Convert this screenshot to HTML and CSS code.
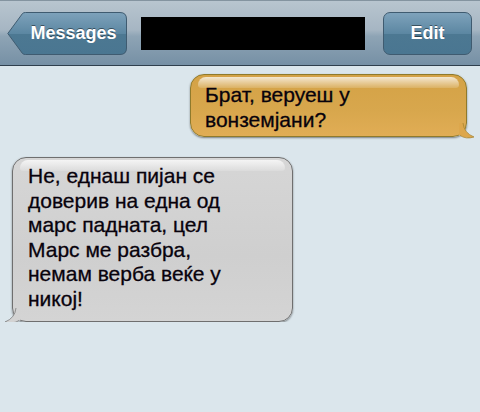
FILE: index.html
```html
<!DOCTYPE html>
<html lang="en">
<head>
    <meta charset="UTF-8">
    <meta name="viewport" content="width=device-width, initial-scale=1.0">
    <title>Messages</title>
    <link rel="stylesheet" href="styles.css">
</head>
<body>

    <!-- top navigation bar -->
    <div class="navbar">
        <button class="nav-btn back-btn">
            <svg class="back-shape" width="120" height="43" viewBox="0 0 120 43">
                <defs>
                    <linearGradient id="backFill" x1="0" y1="0" x2="0" y2="1">
                        <stop offset="0" stop-color="#7ea2bb"/>
                        <stop offset="0.5" stop-color="#5c87a2"/>
                        <stop offset="0.52" stop-color="#4c7892"/>
                        <stop offset="1" stop-color="#4a7691"/>
                    </linearGradient>
                </defs>
                <path d="M0.8 21.5 L15.5 1.5 Q16.5 0.5 18.5 0.5 L113 0.5 Q119.5 0.5 119.5 7 L119.5 36 Q119.5 42.5 113 42.5 L18.5 42.5 Q16.5 42.5 15.5 41.5 Z" fill="url(#backFill)" stroke="#3f5b70" stroke-width="1"/>
            </svg>
            <span class="btn-label">Messages</span>
        </button>
        <div class="contact-name"></div>
        <button class="nav-btn edit-btn"><span class="btn-label">Edit</span></button>
    </div>

    <!-- conversation -->
    <div class="thread">
        <div class="bubble sent">
            <p class="msg-text">Брат, веруеш у<br>вонземјани?</p>
            <svg class="tail tail-right" width="16" height="16" viewBox="0 0 16 16">
                <path d="M0 0 L4 0 Q5 10 15 14 Q7 16.5 0 12 Z" fill="#dda74c"/>
                <path d="M4 0 Q5 10 15 14 Q7 16.5 1 12.5" fill="none" stroke="#a0802e" stroke-width="0.7"/>
            </svg>
        </div>

        <div class="bubble received">
            <p class="msg-text">Не, еднаш пијан се<br>доверив на една од<br>марс падната, цел<br>Марс ме разбра,<br>немам верба веќе у<br>никој!</p>
            <svg class="tail tail-left" width="16" height="16" viewBox="0 0 16 16">
                <path d="M16 0 L12 0 Q11 10 1 14 Q9 16.5 16 12 Z" fill="#d3d3d3"/>
                <path d="M12 0 Q11 10 1 14 Q9 16.5 15 12.5" fill="none" stroke="#6f6f6f" stroke-width="0.7"/>
            </svg>
        </div>
    </div>

</body>
</html>
```

FILE: styles.css
```css
/* page */
body {
    margin: 0;
    background-color: #dbe6ec;
    font-family: "Liberation Sans", Arial, sans-serif;
}

/* header bar */
.navbar {
    display: flex;
    align-items: center;
    box-sizing: border-box;
    height: 66px;
    padding-left: 7px;
    background: linear-gradient(#b8c5cf 0%, #a6b6c3 45%, #8ea4b5 55%, #7690a5 100%);
    border-top: 1px solid #8494a0;
    border-bottom: 1px solid #2f3f4d;
}

.nav-btn {
    position: relative;
    height: 43px;
    padding: 0;
    border: none;
    background: none;
    color: #fff;
    font-family: "Liberation Sans", Arial, sans-serif;
    font-weight: bold;
    font-size: 18px;
    text-shadow: 0 -1px 0 rgba(0, 0, 0, 0.45);
}

.back-btn {
    width: 120px;
    padding-left: 13px;
}

.back-shape {
    position: absolute;
    top: 0;
    left: 0;
}

.btn-label {
    position: relative; /* keeps text above the svg shape */
}

.contact-name {
    width: 224px;
    height: 33px;
    margin-left: 14px;
    background-color: #000;
}

.edit-btn {
    width: 89px;
    margin-left: 18px;
    border: 1px solid #3f5b70;
    border-radius: 7px;
    background: linear-gradient(#7ea2bb 0%, #5c87a2 50%, #4c7892 52%, #4a7691 100%);
}

/* messages */
.thread {
    display: flex;
    flex-direction: column;
    padding: 8px 13px 0 12px;
}

.bubble {
    position: relative;
    border-radius: 14px;
    box-shadow: 0 1px 2px rgba(0, 0, 0, 0.45);
}

/* glossy highlight on top of each bubble */
.bubble::before {
    content: "";
    position: absolute;
    top: 2px;
    left: 7px;
    right: 7px;
    height: 11px;
    border-radius: 10px 10px 4px 4px;
    background: linear-gradient(rgba(255, 255, 255, 0.75), rgba(255, 255, 255, 0.15));
}

.msg-text {
    position: relative;
    margin: 0;
    font-size: 21px;
    line-height: 24.5px;
    color: #08020c;
    -webkit-text-stroke: 0.3px #08020c;
    white-space: nowrap;
}

.sent {
    align-self: flex-end;
    width: 277px;
    box-sizing: border-box;
    padding: 8px 14px 4px 14px;
    background: linear-gradient(#d4a246 0%, #d8a74d 60%, #e1ad55 100%);
    border: 1px solid #8f7a2c;
}

.received {
    align-self: flex-start;
    width: 281px;
    box-sizing: border-box;
    margin-top: 20px;
    padding: 6px 15px 10px 15px;
    background: linear-gradient(#d6d6d6 0%, #cfcfcf 60%, #d4d4d4 100%);
    border: 1px solid #6f6f6f;
}

.tail {
    position: absolute;
    bottom: -3px;
}

.tail-right {
    right: -9px;
}

.tail-left {
    left: -9px;
}
```
